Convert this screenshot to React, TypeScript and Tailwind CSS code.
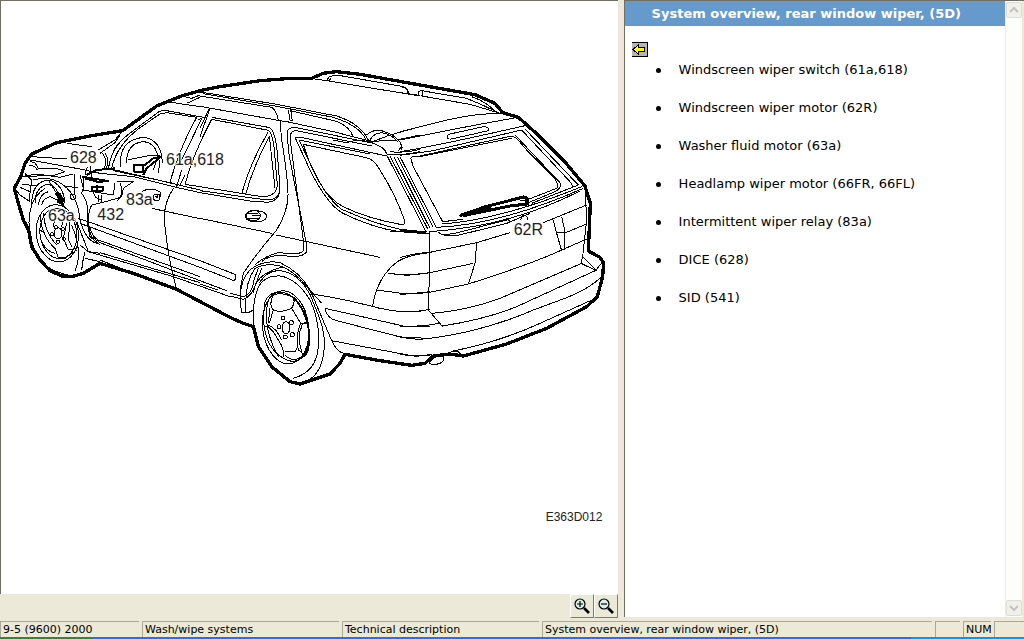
import type { ReactNode } from "react";

const components = [
  "Windscreen wiper switch (61a,618)",
  "Windscreen wiper motor (62R)",
  "Washer fluid motor (63a)",
  "Headlamp wiper motor (66FR, 66FL)",
  "Intermittent wiper relay (83a)",
  "DICE (628)",
  "SID (541)",
];

const callouts = [
  { x: 210, y: 489, text: "628" },
  { x: 498, y: 495, text: "61a,618" },
  { x: 378, y: 615, text: "83a" },
  { x: 144, y: 663, text: "63a" },
  { x: 292, y: 660, text: "432" },
  { x: 1541, y: 705, text: "62R" },
];

// Three drawing units per pixel
function CarDrawing() {
  return (
    <svg
      viewBox="6 6 1845 1770"
      className="h-[590px] w-[615px] shrink-0"
      fill="none"
      stroke="#000"
      strokeWidth="3"
      strokeLinejoin="round"
      role="img"
      aria-label="Rear window wiper components"
    >
      <g shapeRendering="crispEdges">
        {/* Front */}
        <g transform="translate(0 180)">
          <path d="M368 212 345 240 295 270M360 225 345 248 300 280M200 250 275 260M95 290 200 297M90 300 240 327 300 340M308 280Q325 305 310 330M316 280Q330 305 316 330M355 250Q335 275 325 325" />
          <path d="M325 325Q335 255 400 212L470 160Q480 150 500 152L610 172 595 180M335 325Q350 255 420 203L480 162 500 158 590 172M590 172Q545 250 510 365M605 175Q565 260 545 300M630 145 600 230M500 125 600 140M635 178Q580 280 555 373L600 380M545 330 530 380M555 345 540 375" />
          <path d="M545 108 575 115 600 105M560 130 600 112M470 138 500 125M325 325 600 390M340 332 520 370M300 340 400 350 520 380 600 398M520 385Q485 440 495 500 505 600 530 688M455 445 600 476" />
          <path d="M362 320Q355 240 430 232 485 238 487 310M380 310Q378 250 430 245 470 248 475 300M383 300 440 288 482 285M470 300 460 330M480 300 475 340" />
          <path d="M402 315h28v20h-28zM430 318 460 295 483 290 440 325 430 345" strokeWidth="6" />
          <path d="M247 350 325 363 295 366 255 355M260 345 290 330 345 325M275 380h34v12h-34zM290 374v22" strokeWidth="6" />
          <path d="M240 345 250 385M250 352 250 390 340 405 345 370M262 320 255 345M270 318 275 350M350 365 400 365 370 385 365 410Q340 420 275 435 260 460 268 510M250 385 245 400Q270 430 262 490L270 530 300 555M280 395Q285 420 305 418M295 405v20M305 405v20M222 342v60M195 380 235 382M360 370Q375 400 350 425" />
          <circle cx="219" cy="410" r="8" />
          <circle cx="470" cy="412" r="10" />
          <path d="M425 395Q450 380 480 395L482 412M467 408 472 414M472 405v10" />
          <path d="M90 305 105 308 115 325 170 325 195 335 165 345 75 350M88 315 105 320 112 330M62 350 110 342 180 352 220 342M65 372 110 378M60 382 90 395M43 385 60 405 90 425 88 400M75 340 95 360 90 400M100 360Q150 345 190 375 235 410 240 480M95 435Q95 365 145 360 190 370 195 430M105 430Q105 380 145 372 175 380 180 420M115 435Q120 400 145 395M125 435Q130 415 150 410 180 420 190 440M145 360 170 400 195 425M165 400 185 430M175 395 193 440M165 420 195 415M88 510Q80 420 135 385" />
          <path d="M170 400 190 432M180 400 192 425M170 425 190 432" strokeWidth="5" />
          <ellipse cx="172" cy="520" rx="63" ry="86" transform="rotate(-7 172 520)" />
          <ellipse cx="175" cy="520" rx="55" ry="76" transform="rotate(-7 175 520)" />
          <path d="M88 500Q95 590 150 625 180 642 220 648M215 495Q250 580 225 632M230 485 265 575M240 478Q255 540 290 550M255 575 250 595 245 630M255 595 300 605M240 555 265 575 300 580" />
          <path d="M120 465Q125 530 165 565L175 595M130 460Q135 520 170 555M120 510 135 520M200 490 190 535 205 570 230 565M210 480 205 540 215 560M170 590 195 595 230 570M165 475 160 500M190 475 185 500M125 545Q140 575 165 580" />
          <ellipse cx="174" cy="520" rx="12" ry="17" />
          <circle cx="168" cy="502" r="5" />
          <circle cx="188" cy="508" r="5" />
          <circle cx="156" cy="523" r="5" />
          <circle cx="191" cy="536" r="5" />
          <circle cx="174" cy="545" r="5" />
          <path d="M235 475 600 602M240 490 600 622M270 500Q275 530 295 540L600 650M268 510 275 530 300 548 600 662M265 575 520 650 690 710M300 578 600 668M300 600 400 640" />
        </g>

        {/* Doors and roof */}
        <g transform="translate(600 180)">
          <path d="M0 96 225 132 410 168Q480 190 505 240M10 101 225 138 400 172Q475 195 498 238M0 108 215 142Q228 150 235 180M270 152 410 184Q450 200 460 232M265 150 270 180 277 182 272 150M0 139 240 182 275 187M260 185 400 215 490 238 520 245" />
          <path d="M345 57 380 62 660 108M380 62 388 50 410 45 600 78Q625 82 625 98M388 62 394 53" />
          <path d="M240 182 245 240Q262 340 264 400 266 450 230 510 170 580 130 640L120 690M35 178 200 210Q215 210 222 260L232 375Q230 410 185 410L0 380M35 172 205 202Q225 205 232 280L240 385Q238 420 200 420L0 392M0 398 150 423 205 427Q240 420 238 395M35 178 0 250M28 145 0 205M205 215Q150 310 125 402M208 228Q160 320 137 402M208 228 225 385" />
          <path d="M262 215Q265 200 290 203L520 250M262 215Q262 240 268 290L318 545 320 575Q312 588 285 590L235 586Q200 590 185 605M270 235Q270 210 290 212L515 258M270 235 310 540 312 570Q305 580 285 582L235 578Q190 590 165 615" />
          <path d="M0 475 215 520M228 525 540 592M0 602 105 643Q112 655 102 662L0 622M0 662 80 692M0 672 55 690" />
          <ellipse cx="168" cy="469" rx="32" ry="17" />
          <ellipse cx="160" cy="467" rx="21" ry="16" />
          <path d="M145 460H175M155 467H180M145 475H175" />
          <path d="M285 232Q300 230 330 238L560 288M285 232 330 330Q380 430 425 458 520 505 600 515L690 522M297 240 340 330Q380 415 425 448 520 490 600 508L660 514M310 253 495 292Q520 295 540 330 590 410 615 485 615 495 600 493 500 475 430 440 390 420 360 370 330 320 310 253M297 240 510 282" />
          <path d="M500 225Q515 208 545 212 600 230 605 260L595 272M510 240Q520 220 545 218 580 225 592 245M510 248 570 225 660 200M510 248Q540 240 590 240L660 225M520 250Q555 262 560 282 600 288 660 275M400 240 440 248 470 240 510 245M570 275Q620 280 660 268" />
        </g>

        {/* Tailgate */}
        <g transform="translate(1200 180)">
          <path d="M-40 285 78 515M-30 288 84 508M-18 290 90 505M-8 290 100 502M0 290 108 500M32 295Q35 288 60 288L335 228M32 295 40 320 128 485M-30 515 80 515M0 510 85 520" />
          <path d="M0 215 150 178Q230 160 310 160M0 240 150 210Q250 190 355 172M0 275Q100 260 375 197M0 286 100 272 365 210M60 290 335 235M145 238Q138 225 150 222L250 200Q268 200 265 212L150 238M0 250Q10 258 4 270" />
          <path d="M0 80 15 83Q25 88 22 100M0 98 50 105M55 105Q53 92 65 92L200 115Q250 135 295 158M65 108 210 133 300 160M65 92Q72 100 65 108M215 110Q260 125 285 155" />
          <path d="M335 228 350 235 380 270 460 350Q478 375 470 385L385 418M345 225 480 368Q485 385 465 395L385 428M365 210 510 365Q520 378 515 382M375 207 535 375M535 375 395 430M545 380Q300 480 125 492M550 385Q300 495 108 502M540 393Q330 500 88 515M115 517Q130 530 170 527L320 490 390 460M125 525 165 520 320 480M128 485 190 478M320 475l10 10" />
          <path d="M182 466 265 438 370 411Q388 414 382 432L330 438 190 467" strokeWidth="9" />
          <path d="M182 466 255 440 275 448Z" fill="#000" strokeWidth="8" />
          <path d="M360 420h15v14M362 480Q365 465 373 465 380 465 384 480M430 488 560 435M458 475 470 520 485 572M485 470 495 515 492 570M470 518 497 518 560 492M555 380 560 480 548 590 543 610 585 630M550 592 588 630 608 605" />
        </g>

        {/* Rear wheel */}
        <g transform="translate(690 720)">
          <path d="M72 260Q65 190 85 140 105 105 150 108 200 115 240 180 270 240 265 320 260 395 190 415M88 130Q110 90 150 92 220 100 255 200 290 280 282 330 275 400 235 420" />
          <ellipse cx="167" cy="262" rx="69" ry="110" transform="rotate(-7 167 262)" />
          <path d="M105 185Q120 150 160 158 200 165 230 230 245 310 220 350 190 375 160 355 110 325 102 255 100 215 105 185M115 180Q95 260 145 350" />
          <path d="M130 165Q115 195 130 210 155 220 185 205 200 180 185 170 155 155 130 165M120 205 115 250M130 210 118 250M185 205 212 250 235 250M212 250Q195 290 205 330L225 345M235 250Q215 245 215 260 200 290 215 335M110 258Q130 270 145 300 165 330 160 350M115 255Q140 265 155 300M165 335 195 335 200 325M165 345Q190 370 215 350M105 260H118" />
          <path d="M190 170Q240 230 238 300 235 350 215 350" strokeWidth="5" />
          <ellipse cx="168" cy="263" rx="12" ry="18" />
          <circle cx="159" cy="234" r="6" />
          <circle cx="184" cy="248" r="6" />
          <circle cx="147" cy="260" r="6" />
          <circle cx="187" cy="284" r="6" />
          <circle cx="166" cy="291" r="6" />
          <path d="M35 218Q20 130 60 90 100 58 150 68 210 95 240 150L275 190M48 215Q42 130 75 85 110 68 150 78 200 95 245 160 270 220 300 290 320 340 345 340M35 218H55L70 210M0 160 40 170Q65 165 72 120L85 85M0 168 40 178Q65 170 78 130L95 85M70 160Q75 110 130 90L160 80" />
          <path d="M240 162Q300 168 410 195 500 220 555 215L600 208M285 205 520 258 600 258M285 205Q290 235 320 242L515 292 600 295M305 302 550 348 600 345M600 38Q520 45 490 75 440 120 428 198M475 100 530 106 600 98M440 150 530 162 600 155" />
        </g>

        {/* Rear bumper */}
        <g transform="translate(1200 660)">
          <path d="M87 35 90 100 85 270 128 320M90 97 230 68 330 38M0 113Q40 100 90 97M0 165Q50 165 90 158L220 130M230 68 225 130 205 192M0 223 85 218 205 192Q400 130 485 90L565 55M0 275Q50 278 90 268M95 280Q200 272 300 235L545 130M0 318Q60 322 120 310M125 318Q250 300 350 260L590 150M0 350Q40 362 90 355 250 335 400 270L500 233Q570 205 605 170M0 402Q50 415 95 402M160 393Q300 365 420 310L580 238 592 225" />
          <path d="M88 430Q100 405 130 408 137 420 120 430 100 437 88 430M145 400Q170 385 182 402" />
        </g>

        {/* Body silhouette */}
        <path
          strokeWidth="10"
          d="M1755 558 1690 480 1620 410 1555 352 1508 338 1485 310 1425 284 1300 262 1080 223 1010 215 970 220 935 235 860 236 780 242 660 260 600 272 545 288 470 318 368 392 270 408 170 428 95 462 75 490 62 530 43 565 55 610 70 660 86 690 95 740 120 780 150 812 185 828 215 830 250 820 300 790 400 820 530 868 690 952 730 970 760 980 775 1040 815 1100 870 1145 900 1152 990 1122 1020 1090 1035 1063 1140 1082 1235 1096 1275 1090 1300 1068 1350 1062 1390 1068 1520 1032 1640 985 1760 920 1792 890 1808 830 1811 788 1800 772 1765 753 1771 610Z"
        />
      </g>

      <g fill="#222" stroke="none" className="font-['Liberation_Sans',Arial,sans-serif]">
        {callouts.map((c) => (
          <text key={c.text} x={c.x} y={c.y} fontSize="48" stroke="#fff" strokeWidth="6" paintOrder="stroke">
            {c.text}
          </text>
        ))}
        <text x="1637" y="1563" fontSize="36">E363D012</text>
      </g>
    </svg>
  );
}

function ZoomIcon({ plus = false }: { plus?: boolean }) {
  return (
    <svg viewBox="0 0 16 16" className="size-4" fill="none" stroke="#000">
      <circle cx="6" cy="6" r="5" fill="#d9f0ea" strokeWidth="1.2" />
      <path d={plus ? "M3 6h6M6 3v6" : "M3 6h6"} strokeWidth="1.2" />
      <path d="m10 10 5 5" strokeWidth="2.6" />
    </svg>
  );
}

function ToolButton({ label, children }: { label: string; children: ReactNode }) {
  return (
    <button
      aria-label={label}
      className="flex h-6 w-6 items-center justify-center border border-t-white border-l-white border-r-[#807d70] border-b-[#807d70] bg-[#ece9d8]"
    >
      {children}
    </button>
  );
}

function ScrollButton({ label, d }: { label: string; d: string }) {
  return (
    <button aria-label={label} className="flex h-4 w-4 items-center justify-center rounded-xs border border-[#dddcd6] bg-[#f1f0ea]">
      <svg viewBox="0 0 10 10" className="size-2.5" fill="none" stroke="#c4c3bc" strokeWidth="2">
        <path d={d} />
      </svg>
    </button>
  );
}

function StatusCell({ className, children }: { className: string; children?: ReactNode }) {
  return (
    <div className={`h-4 overflow-hidden border-t border-l border-[#aca899] pl-0.5 leading-4 whitespace-nowrap ${className}`}>
      {children}
    </div>
  );
}

export default function App() {
  return (
    <div className="flex h-screen flex-col overflow-hidden bg-[#ece9d8] font-['DejaVu_Sans',Verdana,sans-serif] text-black">
      <main className="flex min-h-0 flex-1">
        <section className="flex w-[60.9%] shrink-0 flex-col pr-1.5">
          <div className="min-h-0 flex-1 overflow-hidden border-t border-l border-[#716f64] bg-white pt-px pl-px">
            <CarDrawing />
          </div>
          <div className="flex h-[25px] shrink-0 justify-end">
            <ToolButton label="Zoom in">
              <ZoomIcon plus />
            </ToolButton>
            <ToolButton label="Zoom out">
              <ZoomIcon />
            </ToolButton>
          </div>
        </section>

        <section className="mb-0.5 flex min-w-0 flex-1 border-t border-l border-[#716f64] bg-white">
          <div className="min-w-0 flex-1">
            <h1 className="h-[25px] bg-[#6699cc] pl-[27px] text-[13px] leading-[25px] font-bold whitespace-nowrap text-white">
              System overview, rear window wiper, (5D)
            </h1>
            <button aria-label="Back" className="mt-4 ml-[7px] block">
              <svg viewBox="0 0 16 15" className="h-[15px] w-4" shapeRendering="crispEdges">
                <path d="M0 0h16v15H0z" fill="#000" />
                <path d="M0 1h15v13H0z" fill="#b8b5b8" />
                <path d="M1 7.5 6.5 2.5V5.5H12.5V9.5H6.5V12.5Z" fill="#ff0" stroke="#000" />
              </svg>
            </button>
            <ul className="mt-[3px] ml-[31px] space-y-[18px] text-[13px] leading-5">
              {components.map((item) => (
                <li
                  key={item}
                  className="flex items-center before:mr-[18px] before:size-[5px] before:shrink-0 before:rounded-full before:bg-black"
                >
                  {item}
                </li>
              ))}
            </ul>
          </div>
          <div className="flex w-[19px] flex-col items-center justify-between border-r-2 border-l border-r-[#ece9d8] border-l-[#eeede5] bg-[#fdfdfa] py-px">
            <ScrollButton label="Scroll up" d="m1 7 4-4 4 4" />
            <ScrollButton label="Scroll down" d="m1 3 4 4 4-4" />
          </div>
        </section>
      </main>

      <footer className="flex h-[18px] shrink-0 items-end gap-[3px] text-[11px]">
        <StatusCell className="w-[139px]">9-5 (9600) 2000</StatusCell>
        <StatusCell className="w-[197px]">Wash/wipe systems</StatusCell>
        <StatusCell className="w-[197px]">Technical description</StatusCell>
        <StatusCell className="flex-1">System overview, rear window wiper, (5D)</StatusCell>
        <StatusCell className="w-[25px]" />
        <StatusCell className="w-[28px]">NUM</StatusCell>
        <StatusCell className="w-[30px]" />
      </footer>
      <div className="flex h-0.5 shrink-0 bg-[#2b6fe0]">
        <div className="w-[9%] bg-[#2f8a2f]" />
        <div className="flex-1" />
        <div className="w-[11%] bg-[#0f94e8]" />
      </div>
    </div>
  );
}
